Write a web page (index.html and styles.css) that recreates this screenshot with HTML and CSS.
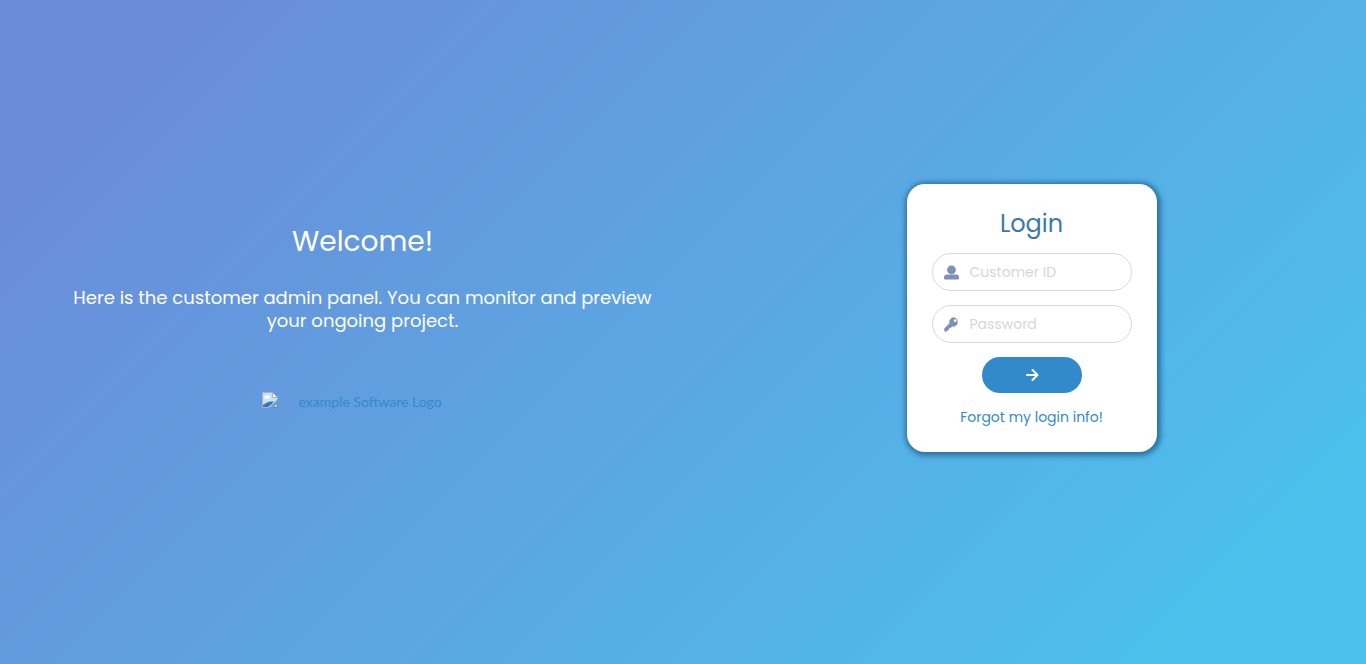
FILE: index.html
```html
<!DOCTYPE html>
<html lang="en">
<head>
<meta charset="utf-8">
<meta name="viewport" content="width=device-width, initial-scale=1">
<title>Login</title>
<link rel="stylesheet" href="styles.css">
</head>
<body class="page">
<main class="layout">
  <section class="intro">
    <h1 class="intro-title">Welcome!</h1>
    <p class="intro-text">Here is the customer admin panel. You can monitor and preview your ongoing project.</p>
    <a class="brand" href="#">
      <svg class="brand-icon" viewBox="0 0 16 16" aria-hidden="true">
        <path d="M.5.5h10l5 5v10H.5z" fill="#c6e2f8" stroke="#b3a9c8"/>
        <path d="M3 6.500c-1.500 0-1.500-2 0-2 .5-2 3-2 3.500-.5 2-.2 2 2.500.5 2.500z" fill="#fff"/>
        <path d="M1 15v-2l4-2.500 3-1h4L9 13l-3 2z" fill="#347da8"/>
        <path d="M10.500.5v5h5z" fill="#fff" stroke="#b3a9c8"/>
        <path d="M7 16 16 7v3l-6 6z" fill="#659bdf"/>
        <path d="M11 15.500h4.500V11z" fill="#c6e2f8" stroke="#5c80b4"/>
      </svg>
      <span>example Software Logo</span>
    </a>
  </section>
  <section class="access">
    <form class="card" action="#">
      <h2 class="card-title">Login</h2>
      <div class="field">
        <label class="field-label" for="customer"><svg class="field-icon" viewBox="0 0 15 15" role="img" aria-label="Customer ID">
          <circle cx="7.500" cy="4.800" r="4.400"/><path d="M0 12.500Q0 9.500 3 9.500h9q3 0 3 3v1q0 1-1 1H1q-1 0-1-1z"/></svg></label>
        <input class="field-input" id="customer" type="text" placeholder="Customer ID">
      </div>
      <div class="field">
        <label class="field-label" for="password"><svg class="field-icon" viewBox="0 0 15 15" role="img" aria-label="Password">
          <path fill-rule="evenodd" d="M10 .3a4.700 4.700 0 0 0-4.600 6L.3 11.400v3h3.200v-1.500H5v-1.700h1.500L8 9.600A4.700 4.700 0 1 0 10 .3zm1.200 2a1.400 1.400 0 1 1 0 2.800 1.400 1.400 0 0 1 0-2.800z"/></svg></label>
        <input class="field-input" id="password" type="password" placeholder="Password">
      </div>
      <button class="submit" type="submit" aria-label="Log in">
        <svg class="submit-icon" viewBox="0 0 14 14" aria-hidden="true"><path d="M2 7h10M7.500 2l5 5-5 5"/></svg>
      </button>
      <a class="forgot" href="#">Forgot my login info!</a>
    </form>
  </section>
</main>
</body>
</html>
```

FILE: styles.css
```css
* { box-sizing: border-box; }

.page {
  margin: 0;
  font-family: Poppins, Inter, "Open Sans", sans-serif;
  font-size: 14px;
  background: linear-gradient(135deg, #6b8cd9 10%, #4cc0ec 90%) fixed;
}

.layout {
  min-height: 100vh;
  padding: 0 0 28px 28px;
  display: grid;
  grid-template-columns: 1fr 1fr;
  align-items: center;
}

.intro {
  padding: 0 36px;
  display: flex;
  flex-direction: column;
  align-items: center;
  text-align: center;
  color: #fff;
}

.intro-title {
  margin: 0 0 26px;
  font-size: 28px;
  line-height: 36px;
  font-weight: 400;
}

.intro-text {
  margin: 0 0 60px;
  font-size: 18px;
  line-height: 23px;
}

.brand {
  width: 202px;
  display: flex;
  align-items: flex-start;
  gap: 21px;
  font-family: Lato, sans-serif;
  line-height: 20px;
  color: #338acb;
  text-decoration: none;
}

.brand-icon { width: 16px; height: 16px; }

.access { display: flex; justify-content: center; }

.card {
  width: 250px;
  padding: 25px;
  display: flex;
  flex-direction: column;
  align-items: center;
  gap: 14px;
  background: #fff;
  border-radius: 18px;
  box-shadow: 1px 1px 5px 3px #2f74a4;
}

.card-title {
  margin: 0;
  font-size: 24px;
  line-height: 30px;
  font-weight: 400;
  color: #3a7ba5;
}

.field {
  width: 100%;
  height: 38px;
  padding: 0 11px;
  display: flex;
  align-items: center;
  gap: 11px;
  border: 1px solid #d8d8e0;
  border-radius: 19px;
}

.field:focus-within { border-color: #338acb; }

.field-label { display: flex; }

.field-icon { width: 15px; height: 15px; fill: #7f8fb5; }

.field-input {
  flex: 1;
  min-width: 0;
  padding: 0;
  border: 0;
  outline: 0;
  background: transparent;
  font: inherit;
  color: #3a7ba5;
}

.field-input::placeholder { color: #d6d6de; opacity: 1; }

.submit {
  width: 100px;
  height: 36px;
  display: flex;
  align-items: center;
  justify-content: center;
  border: 0;
  border-radius: 18px;
  background: #338acb;
  cursor: pointer;
}

.submit-icon {
  width: 14px;
  height: 14px;
  fill: none;
  stroke: #fff;
  stroke-width: 2;
  stroke-linecap: round;
  stroke-linejoin: round;
}

.forgot {
  line-height: 20px;
  color: #338acb;
  text-decoration: none;
}
```
